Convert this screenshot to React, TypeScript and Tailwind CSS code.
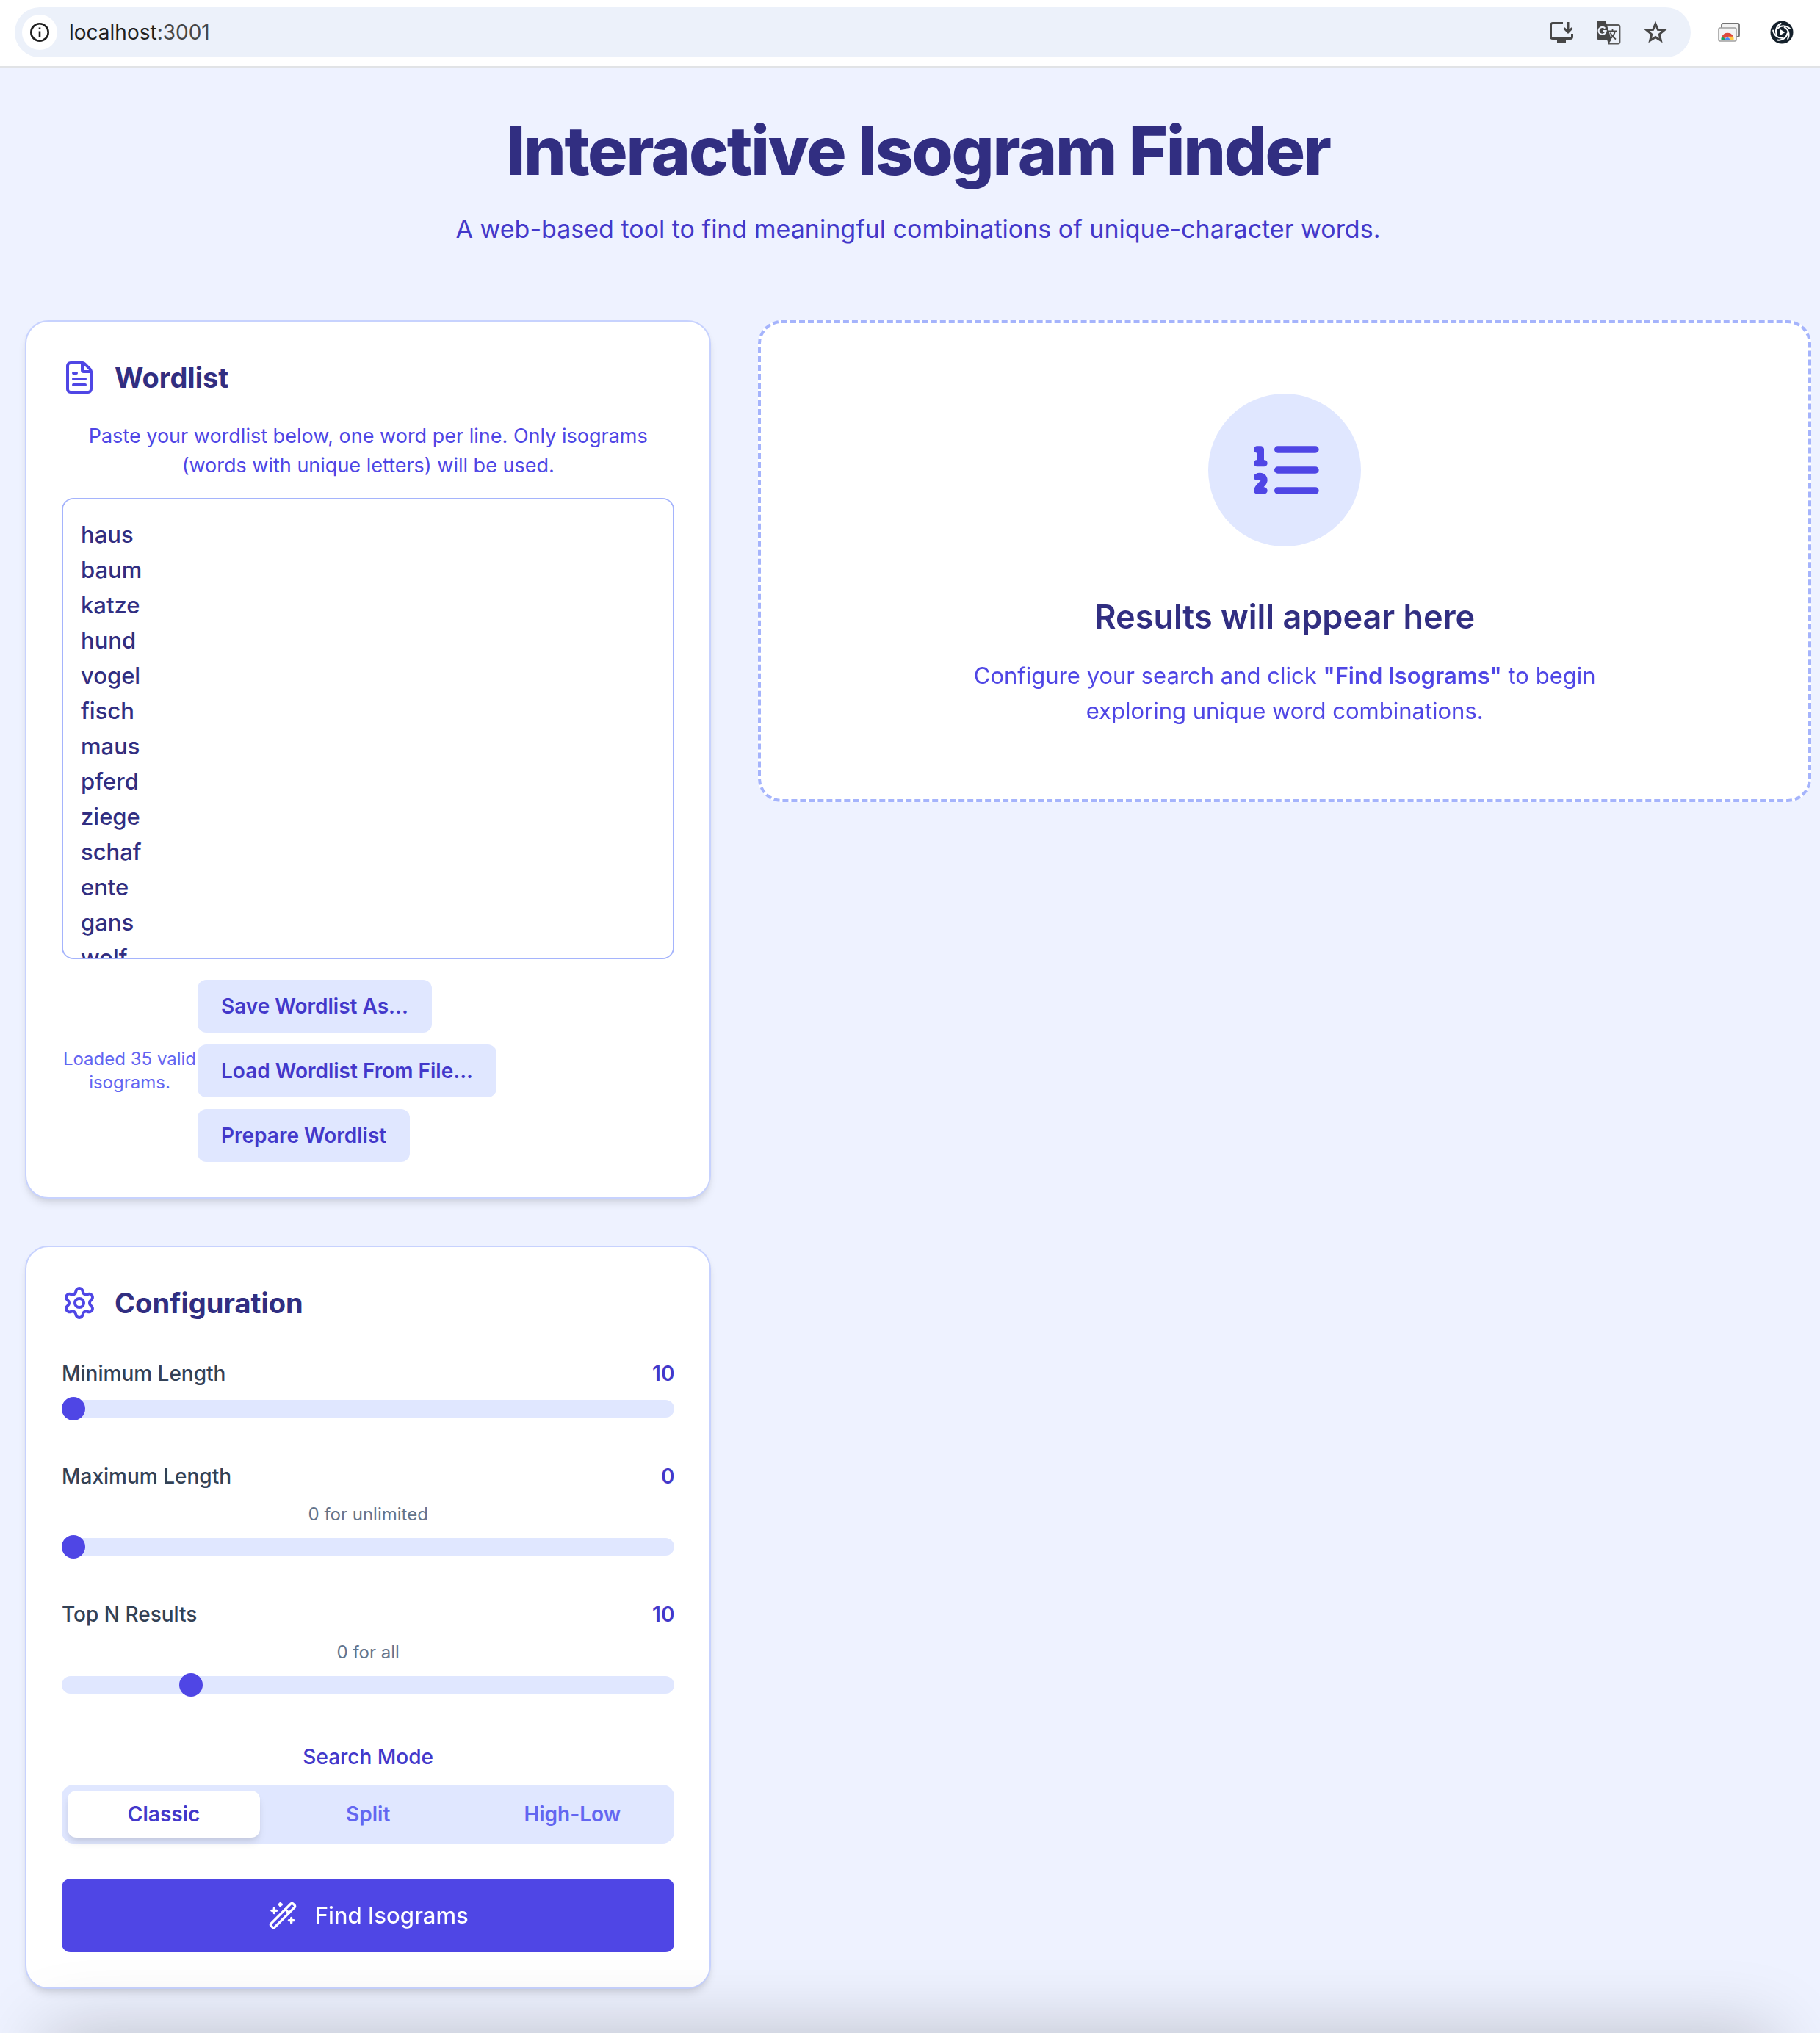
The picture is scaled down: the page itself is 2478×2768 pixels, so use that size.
import React, { useState } from "react";
import { FileText, Settings, WandSparkles } from "lucide-react";

const WORDS = [
  "haus", "baum", "katze", "hund", "vogel", "fisch", "maus", "pferd", "ziege",
  "schaf", "ente", "gans", "wolf", "bär", "fuchs", "hirsch", "dachs", "luchs",
].join("\n");

const MODES = ["Classic", "Split", "High-Low"];

function InstallIcon() {
  return (
    <svg viewBox="0 0 32 28" className="h-7 w-8" fill="none" stroke="#474747" strokeWidth="3">
      <path d="M18 1.5H4A2.5 2.5 0 0 0 1.5 4v16A2.5 2.5 0 0 0 4 22.5h24a2.5 2.5 0 0 0 2.5-2.5v-4" />
      <path d="M25 0v13.500M19.500 8.300 25 13.800l5.500-5.500" />
      <path d="M10 25.5h12" strokeWidth="5" />
    </svg>
  );
}

function TranslateIcon() {
  return (
    <svg viewBox="0 0 34 34" className="h-[34px] w-[34px]" fill="none">
      <path d="M13 7h17a2.5 2.5 0 0 1 2.5 2.5V30a2.5 2.5 0 0 1-2.5 2.5H17" stroke="#5a5a5a" strokeWidth="1.8" />
      <path d="M3 1h10l8 26H3a2 2 0 0 1-2-2V3a2 2 0 0 1 2-2Z" fill="#474747" />
      <path d="m15 27h6l-4 6Z" fill="#474747" />
      <path d="M12.4 11.6a5 5 0 1 0 1.2 3.4H9.2" stroke="#edf1fa" strokeWidth="2.2" />
      <path d="M17 15.5h11M22.5 12.5v3M26 15.5c-1 4.5-4 8.5-7.5 11M19.5 17.5c1.5 3.5 4 6.500 7.500 9" stroke="#474747" strokeWidth="1.8" />
    </svg>
  );
}

function StarIcon() {
  return (
    <svg viewBox="0 0 32 32" className="h-8 w-8" fill="none" stroke="#474747" strokeWidth="3">
      <path d="m16 4.5 3.3 7.900 8.500.7-6.500 5.600 2 8.400L16 22.600l-7.300 4.500 2-8.400-6.500-5.600 8.500-.7Z" />
    </svg>
  );
}

function ChromeTabsIcon() {
  return (
    <svg viewBox="0 0 30 26" className="h-[26px] w-[30px]">
      <rect x="5" y="1" width="24" height="18" rx="2" fill="#f3f3f3" stroke="#737373" strokeWidth="1.8" />
      <rect x="1" y="7" width="24" height="18" rx="2" fill="#f5f5f5" stroke="#a0a0a0" strokeWidth="1.6" />
      <path d="M4.5 24a8.500 8.500 0 0 1 1.700-6.500L11 24Z" fill="#1da462" />
      <path d="M5.600 18.300a8.500 8.500 0 0 1 15-.3l-.6 1.400h-7l-4 2Z" fill="#dd4b3e" />
      <path d="M14 18.800h7a8.500 8.500 0 0 1 .4 5.200H14Z" fill="#ffcd46" />
      <path d="M9 24a4 4 0 1 1 8 0Z" fill="#fff" />
      <path d="M9.900 24a3.200 3.200 0 1 1 6.200 0Z" fill="#4c8bf5" />
    </svg>
  );
}

function SwirlIcon() {
  return (
    <svg viewBox="0 0 32 32" className="h-8 w-8">
      <circle cx="16" cy="16" r="15.5" fill="#14202b" />
      <g fill="none" stroke="#fff" strokeWidth="2" strokeLinecap="round">
        {[0, 72, 144, 216, 288].map((angle) => (
          <path key={angle} d="M10.5 10.500c5-4.500 12-4 16.500.500" transform={`rotate(${angle} 16 16)`} />
        ))}
      </g>
      <path d="m13 11.500 7.500 4.500-7.500 4.500Z" fill="#fff" />
    </svg>
  );
}

function OrderedListIcon() {
  return (
    <svg
      viewBox="0 0 24 24"
      className="size-28 text-[#4f46e5]"
      fill="none"
      stroke="currentColor"
      strokeWidth="2"
      strokeLinecap="round"
      strokeLinejoin="round"
    >
      <path d="M10 6h11M10 12h11M10 18h11M4 6h1v4M4 10h2M6 18H4c0-1 2-2 2-3s-1-1.5-2-1" />
    </svg>
  );
}

function BrowserBar() {
  return (
    <div className="flex h-[92px] items-center border-b-2 border-[#e1e3e6] bg-white pr-9 pb-0.5 pl-5">
      <div className="flex h-[68px] flex-1 items-center rounded-full bg-[#ecf1fa] pr-8 pl-[10px]">
        <button aria-label="Site information" className="flex size-12 items-center justify-center rounded-full bg-white">
          <svg viewBox="0 0 26 26" className="size-[26px]" fill="none" stroke="#1f1f1f" strokeWidth="2.6">
            <circle cx="13" cy="13" r="11.7" />
            <path d="M13 11.5v8M13 6.5v2.6" />
          </svg>
        </button>
        <span className="ml-4 flex-1 text-[28px] leading-9 text-[#1f1f1f]">
          localhost<span className="text-[#474747]">:3001</span>
        </span>
        <div className="flex items-center gap-[31px]">
          <button aria-label="Install app"><InstallIcon /></button>
          <button aria-label="Translate page"><TranslateIcon /></button>
          <button aria-label="Bookmark"><StarIcon /></button>
        </div>
      </div>
      <div className="ml-[37px] flex items-center gap-[41px]">
        <button aria-label="Remote desktop"><ChromeTabsIcon /></button>
        <button aria-label="Extension"><SwirlIcon /></button>
      </div>
    </div>
  );
}

function Card({ children }: { children: React.ReactNode }) {
  return (
    <section className="rounded-[32px] border-2 border-[#c7d2fe] bg-white p-12 shadow-[0_8px_12px_-2px_rgba(0,0,0,0.1),0_4px_8px_-4px_rgba(0,0,0,0.1)]">
      {children}
    </section>
  );
}

type SliderProps = { id: string; label: string; hint?: string; min: number; max: number; initial: number };

function SliderField({ id, label, hint, min, max, initial }: SliderProps) {
  const [value, setValue] = useState(initial);
  return (
    <div>
      <div className="flex justify-between text-[28px] leading-10">
        <label htmlFor={id} className="font-medium text-[#334155]">{label}</label>
        <output htmlFor={id} className="font-semibold text-[#4338ca]">{value}</output>
      </div>
      {hint && <p className="mt-4 text-center text-2xl leading-8 text-[#64748b]">{hint}</p>}
      <input
        id={id}
        type="range"
        min={min}
        max={max}
        value={value}
        onChange={(e) => setValue(Number(e.target.value))}
        className="mt-4 block h-6 w-full cursor-pointer appearance-none rounded-full bg-[#e0e7ff] [&::-webkit-slider-thumb]:size-8 [&::-webkit-slider-thumb]:appearance-none [&::-webkit-slider-thumb]:rounded-full [&::-webkit-slider-thumb]:bg-[#4f46e5]"
      />
    </div>
  );
}

function WordlistCard() {
  const [words, setWords] = useState(WORDS);
  const button = "h-[72px] rounded-xl bg-[#e0e7ff] px-8 text-[28px] leading-10 font-semibold whitespace-nowrap text-[#4338ca]";
  return (
    <Card>
      <div className="flex h-14 items-center gap-6">
        <FileText className="size-12 text-[#4f46e5]" />
        <h2 className="text-[38px] leading-14 font-bold text-[#312e81]">Wordlist</h2>
      </div>
      <label htmlFor="words" className="mt-8 block px-4 text-center text-[27px] leading-10 text-[#4f46e5]">
        Paste your wordlist below, one word per line. Only isograms (words with unique letters) will be used.
      </label>
      <textarea
        id="words"
        value={words}
        onChange={(e) => setWords(e.target.value)}
        spellCheck={false}
        className="mt-6 block h-[628px] w-full resize-none rounded-2xl border-2 border-[#a5b4fc] bg-white p-6 text-[31px] leading-12 font-medium text-[#312e81] outline-none [scrollbar-width:none]"
      />
      <div className="mt-7 flex items-center">
        <p className="w-[185px] shrink-0 text-center text-2xl leading-8 text-[#6366f1]">Loaded 35 valid isograms.</p>
        <div className="flex flex-col items-start gap-4">
          <button className={button}>Save Wordlist As...</button>
          <button className={button}>Load Wordlist From File...</button>
          <button className={button}>Prepare Wordlist</button>
        </div>
      </div>
    </Card>
  );
}

function ConfigurationCard() {
  const [mode, setMode] = useState("Classic");
  return (
    <Card>
      <div className="flex h-14 items-center gap-6">
        <Settings className="size-12 text-[#4f46e5]" />
        <h2 className="text-[38px] leading-14 font-bold text-[#312e81]">Configuration</h2>
      </div>
      <div className="mt-12 flex flex-col gap-15">
        <SliderField id="min" label="Minimum Length" min={10} max={50} initial={10} />
        <SliderField id="max" label="Maximum Length" hint="0 for unlimited" min={0} max={50} initial={0} />
        <SliderField id="top" label="Top N Results" hint="0 for all" min={0} max={50} initial={10} />
      </div>
      <p id="mode" className="mt-16 text-center text-[28px] leading-11 font-medium text-[#4338ca]">Search Mode</p>
      <div role="group" aria-labelledby="mode" className="mt-4 grid grid-cols-3 gap-4 rounded-2xl bg-[#e0e7ff] p-2">
        {MODES.map((m) => (
          <button
            key={m}
            aria-pressed={m === mode}
            onClick={() => setMode(m)}
            className={
              m === mode
                ? "h-16 rounded-xl bg-white text-[28px] leading-10 font-semibold text-[#4338ca] shadow-[0_8px_12px_-2px_rgba(0,0,0,0.1),0_4px_8px_-4px_rgba(0,0,0,0.1)]"
                : "h-16 rounded-xl text-[28px] leading-10 font-semibold text-[#6366f1]"
            }
          >
            {m}
          </button>
        ))}
      </div>
      <button className="mt-12 flex h-[100px] w-full items-center justify-center gap-6 rounded-xl bg-[#4f46e5] text-[31px] leading-12 font-medium text-white">
        <WandSparkles className="size-10" />
        Find Isograms
      </button>
    </Card>
  );
}

function ResultsPlaceholder() {
  return (
    <section className="flex flex-col items-center rounded-[32px] border-4 border-dashed border-[#a5b4fc] bg-white p-24 text-center">
      <div className="rounded-full bg-[#e0e7ff] p-12">
        <OrderedListIcon />
      </div>
      <h2 className="mt-16 text-[45px] leading-16 font-semibold text-[#312e81]">Results will appear here</h2>
      <p className="mt-6 max-w-[896px] text-[31px] leading-12 text-[#4f46e5]">
        Configure your search and click <strong className="font-semibold">"Find Isograms"</strong> to begin exploring unique word combinations.
      </p>
    </section>
  );
}

export default function App() {
  return (
    <div className="relative flex min-h-screen flex-col overflow-hidden bg-[#eef2ff] font-['Inter',sans-serif]">
      <BrowserBar />
      <main className="pt-16 pr-3 pb-15 pl-[34px]">
        <header className="text-center">
          <h1 className="text-[91px] leading-[98px] font-extrabold tracking-tight text-[#312e81]">Interactive Isogram Finder</h1>
          <p className="mt-[30px] text-[34px] leading-14 text-[#4338ca]">A web-based tool to find meaningful combinations of unique-character words.</p>
        </header>
        <div className="mt-24 grid grid-cols-5 items-start gap-16">
          <div className="col-span-2 flex flex-col gap-16">
            <WordlistCard />
            <ConfigurationCard />
          </div>
          <div className="col-span-3">
            <ResultsPlaceholder />
          </div>
        </div>
      </main>
      <div className="pointer-events-none absolute inset-x-16 top-full h-60 shadow-[0_0_100px_0_rgba(0,0,0,0.22)]" />
    </div>
  );
}
